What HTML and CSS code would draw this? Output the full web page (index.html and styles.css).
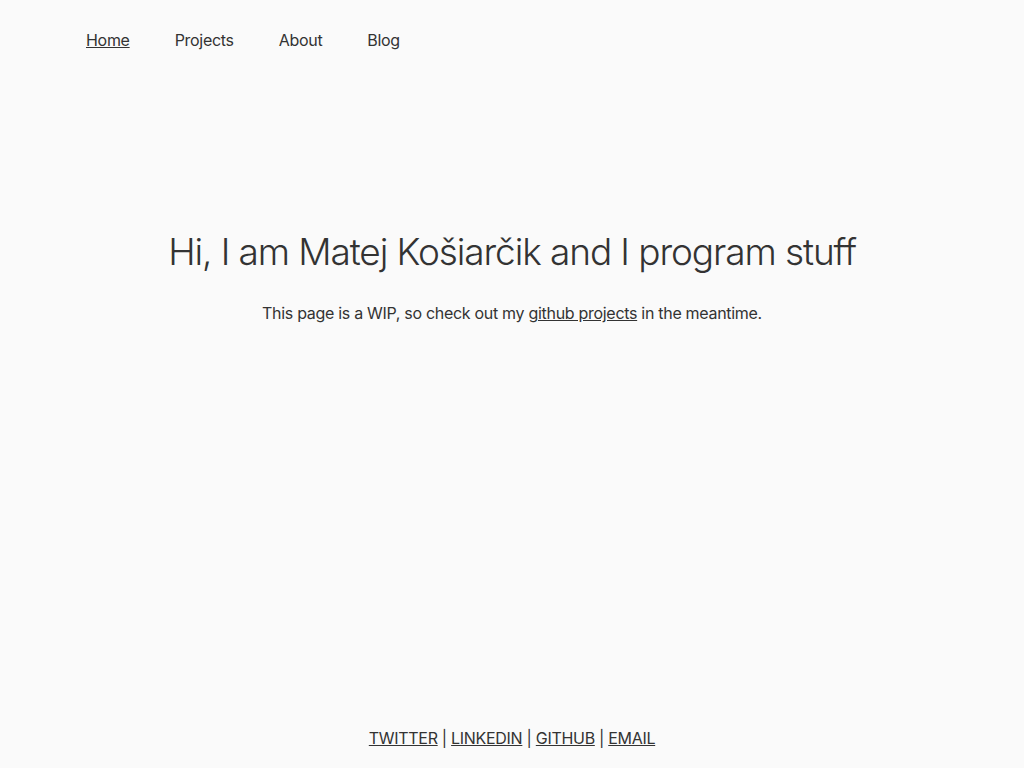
FILE: index.html
```html
<!DOCTYPE html>
<html lang="en">
<head>
<meta charset="utf-8">
<title>Matej Košiarčik</title>
<link rel="stylesheet" href="styles.css">
</head>
<body>
<div class="page">
  <nav class="nav">
    <a class="nav-link active" href="#">Home</a>
    <a class="nav-link" href="#">Projects</a>
    <a class="nav-link" href="#">About</a>
    <a class="nav-link" href="#">Blog</a>
  </nav>
  <main class="hero">
    <h1 class="title">Hi, I am Matej Košiarčik and I program stuff</h1>
    <p class="lead">This page is a WIP, so check out my <a href="#">github projects</a> in the meantime.</p>
  </main>
  <footer class="footer">
    <a href="#">TWITTER</a> | <a href="#">LINKEDIN</a> | <a href="#">GITHUB</a> | <a href="#">EMAIL</a>
  </footer>
</div>
</body>
</html>
```
FILE: styles.css
```css
html, body {
  margin: 0;
  padding: 0;
  background: #fafafa;
}
body {
  font-family: Inter, "Noto Sans", sans-serif;
  color: #333;
  font-size: 16px;
  letter-spacing: -0.3px;
}
a {
  color: #333;
}
.page {
  min-height: 768px;
  display: flex;
  flex-direction: column;
}
.nav {
  display: flex;
  gap: 45px;
  padding: 30px 0 0 86px;
  line-height: 20px;
}
.nav-link {
  text-decoration: none;
}
.nav-link.active {
  text-decoration: underline;
}
.hero {
  text-align: center;
  padding-top: 179px;
}
.title {
  margin: 0;
  font-weight: 300;
  font-size: 37px;
  line-height: 46px;
  letter-spacing: -1.1px;
}
.lead {
  margin: 26px 0 0;
  line-height: 24px;
}
.footer {
  margin-top: auto;
  text-align: center;
  padding-bottom: 20px;
  line-height: 20px;
}
```
